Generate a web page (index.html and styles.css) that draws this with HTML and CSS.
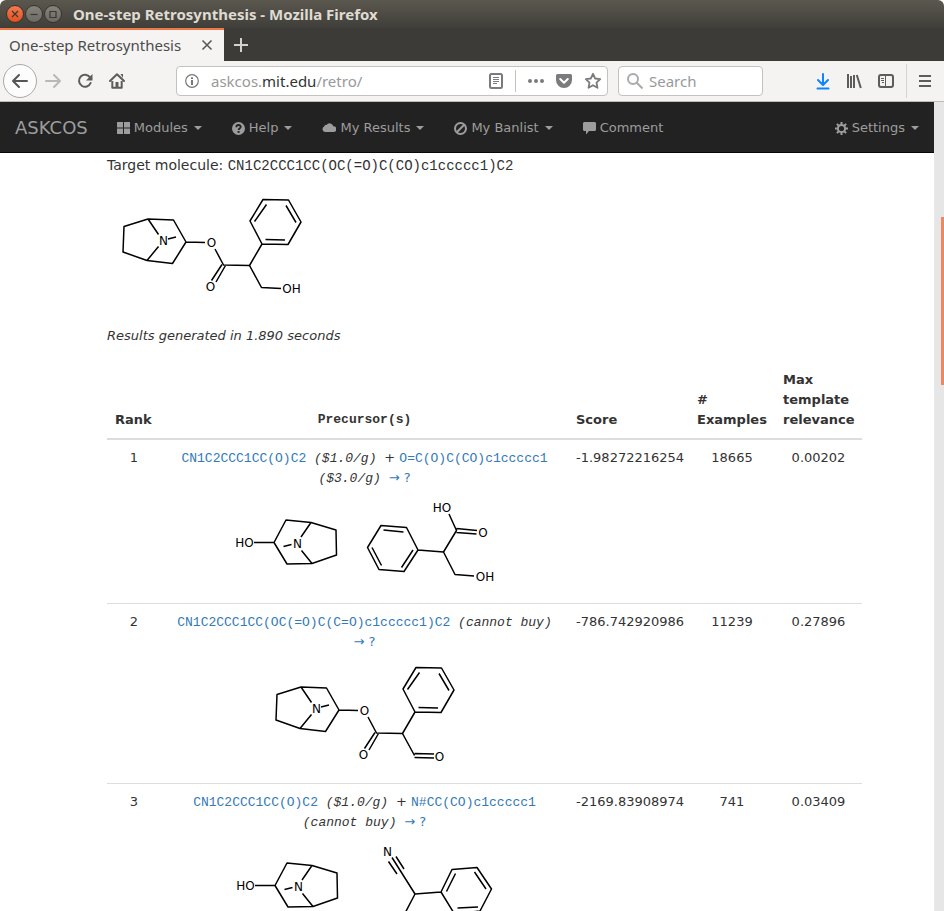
FILE: index.html
```html
<!DOCTYPE html>
<html lang="en">
<head>
<meta charset="utf-8">
<title>One-step Retrosynthesis</title>
<link rel="stylesheet" href="styles.css">
</head>
<body>
<header class="titlebar">
  <div class="window-buttons">
    <button class="win win-close" aria-label="Close window"><svg width="18" height="18" viewBox="0 0 18 18"><path d="M6 6l6 6m0-6l-6 6"/></svg></button>
    <button class="win" aria-label="Minimize"><svg width="18" height="18" viewBox="0 0 18 18"><path d="M5.500 9.500h7"/></svg></button>
    <button class="win" aria-label="Maximize"><svg width="18" height="18" viewBox="0 0 18 18"><path d="M6 6.500h6v6H6z"/></svg></button>
  </div>
  <span class="window-title">One-step Retrosynthesis - Mozilla Firefox</span>
</header>
<div class="tabs">
  <div class="tab"><span>One-step Retrosynthesis</span>
    <button class="plain" aria-label="Close tab"><svg width="12" height="12" viewBox="0 0 12 12" fill="none" stroke="#5a5957" stroke-width="1.6"><path d="M1.500 1.500l9 9m0-9l-9 9"/></svg></button>
  </div>
  <button class="plain new-tab" aria-label="New tab"><svg width="14" height="14" viewBox="0 0 14 14" fill="none" stroke="#d6d0ce" stroke-width="2"><path d="M7 0v14M0 7h14"/></svg></button>
</div>
<div class="toolbar">
  <button class="back" aria-label="Back"><svg width="18" height="16" viewBox="0 0 18 16" fill="none" stroke="#555" stroke-width="2" stroke-linecap="round" stroke-linejoin="round"><path d="M16 8H2M8 2L2 8l6 6"/></svg></button>
  <button class="plain tool" aria-label="Forward"><svg width="18" height="16" viewBox="0 0 18 16" fill="none" stroke="#b9b8b6" stroke-width="2" stroke-linecap="round" stroke-linejoin="round"><path d="M2 8h14M10 2l6 6-6 6"/></svg></button>
  <button class="plain tool" aria-label="Reload"><svg width="16" height="16" viewBox="0 0 16 16" fill="none" stroke="#5c5c5c" stroke-width="2"><path d="M13 4.400A6 6 0 1 0 13.600 10" stroke-linecap="round"/><path d="M15.500 1v6.500H9z" fill="#5c5c5c" stroke="none"/></svg></button>
  <button class="plain tool" aria-label="Home"><svg width="16" height="16" viewBox="0 0 16 16"><path d="M1 8l7-6.800L15 8" fill="none" stroke="#5c5c5c" stroke-width="2" stroke-linecap="round" stroke-linejoin="round"/><path d="M3.300 8v6.800h9.400V8" fill="none" stroke="#5c5c5c" stroke-width="2" stroke-linejoin="round"/><path d="M6.500 9h3v6h-3z" fill="#5c5c5c"/><path d="M11.500 1H14v4z" fill="#5c5c5c"/></svg></button>
  <div class="field url">
    <svg width="14" height="14" viewBox="0 0 14 14" fill="none" stroke="#777" stroke-width="1.2"><circle cx="7" cy="7" r="6.300"/><path d="M7 6v5M7 3.200v1.700" stroke-width="2"/></svg>
    <a class="address" href="#">askcos.<b>mit.edu</b>/retro/</a>
    <button class="plain" aria-label="Reader view"><svg width="14" height="16" viewBox="0 0 14 16" fill="none" stroke="#7b7b7b"><rect x="1" y="1" width="12" height="14" rx="1.500" stroke-width="2"/><path d="M4 4.500h6M4 6.500h6M4 8.500h6M4 10.500h4"/></svg></button>
    <span class="divider"></span>
    <button class="plain" aria-label="Page actions"><svg width="16" height="16" viewBox="0 0 16 16" fill="#7b7b7b"><circle cx="2" cy="8" r="2"/><circle cx="8" cy="8" r="2"/><circle cx="14" cy="8" r="2"/></svg></button>
    <button class="plain" aria-label="Save to Pocket"><svg width="16" height="16" viewBox="0 0 16 16"><path d="M1.500 1h13A1.500 1.500 0 0 1 16 2.500V7A8 8 0 0 1 0 7V2.500A1.500 1.500 0 0 1 1.500 1z" fill="#7b7b7b"/><path d="M4.200 6L8 9.700 11.800 6" fill="none" stroke="#fff" stroke-width="2" stroke-linecap="round" stroke-linejoin="round"/></svg></button>
    <button class="plain" aria-label="Bookmark"><svg width="18" height="18" viewBox="0 0 18 18" fill="none" stroke="#7b7b7b" stroke-width="1.800" stroke-linejoin="round"><path d="M9 1.800l2.200 4.700 5 .6-3.700 3.500 1 5.200L9 13.200l-4.500 2.600 1-5.200L1.800 7.100l5-.6z"/></svg></button>
  </div>
  <label class="field search"><svg width="16" height="16" viewBox="0 0 16 16" fill="none" stroke="#aaa" stroke-width="2"><circle cx="6" cy="6" r="5"/><path d="M9.700 9.700L15.500 15.500"/></svg><input type="text" aria-label="Search" placeholder="Search"></label>
  <div class="right-tools">
    <button class="plain" aria-label="Downloads"><svg width="14" height="17" viewBox="0 0 14 17" fill="none" stroke="#0a84ff" stroke-width="2" stroke-linecap="round" stroke-linejoin="round"><path d="M7 1v10.500M2 7l5 5 5-5M1.500 15.500h11"/></svg></button>
    <button class="plain" aria-label="Library"><svg width="16" height="16" viewBox="0 0 16 16" fill="none" stroke="#5c5c5c" stroke-width="2"><path d="M2 1v14M5 3v12M8 2v13M10.800 2l4 13"/></svg></button>
    <button class="plain" aria-label="Sidebars"><svg width="16" height="16" viewBox="0 0 16 16" fill="none" stroke="#5c5c5c"><rect x="1" y="2" width="14" height="12" rx="2" stroke-width="2"/><path d="M7.500 3v10M3 5.500h3M3 7.500h3M4 9.500h2"/></svg></button>
    <span class="divider tall"></span>
    <button class="plain" aria-label="Menu"><svg width="12" height="14" viewBox="0 0 12 14" stroke="#5c5c5c" stroke-width="2"><path d="M0 2h12M0 7h12M0 12h12"/></svg></button>
  </div>
</div>
<div class="viewport">
  <div class="page">
    <nav class="navbar">
      <a class="brand" href="#">ASKCOS</a>
      <a href="#"><svg width="13" height="13" viewBox="0 0 13 13"><path d="M0 0h6v5.500H0zM7 0h6v5.500H7zM0 6.500h6V12H0zM7 6.500h6V12H7z"/></svg>Modules<i class="caret"></i></a>
      <a href="#"><svg width="13" height="13" viewBox="0 0 13 13"><circle cx="6.500" cy="6.500" r="6.500"/><path d="M4.300 5.200C4.300 2.200 8.900 2.400 8.700 5 8.600 6.500 6.600 6.500 6.600 8" fill="none" stroke="#222" stroke-width="1.800"/><path d="M5.600 9h2v1.800h-2z" fill="#222"/></svg>Help<i class="caret"></i></a>
      <a href="#"><svg width="14" height="13" viewBox="0 0 14 13"><path d="M3 10A2.900 2.900 0 0 1 2.200 4.500 2 2 0 0 1 4.500 2.900 3.900 3.900 0 0 1 11.400 4.200a2.900 2.900 0 0 1 0 5.800z"/></svg>My Results<i class="caret"></i></a>
      <a href="#"><svg class="outline" width="13" height="13" viewBox="0 0 13 13"><circle cx="6.500" cy="6.500" r="5.500"/><path d="M2.800 10.200l7.400-7.400"/></svg>My Banlist<i class="caret"></i></a>
      <a href="#"><svg width="13" height="13" viewBox="0 0 13 13"><path d="M1 0h11l1 1v7l-1 1H6l-3 3.500V9H1L0 8V1z"/></svg>Comment</a>
      <a class="settings" href="#"><svg class="outline" width="13" height="13" viewBox="0 0 13 13"><circle cx="6.500" cy="6.500" r="3.600"/><path d="M6.500 0v2.500M6.500 10.500V13M0 6.500h2.500M10.500 6.500H13M1.900 1.900l1.800 1.800M9.300 9.300l1.800 1.800M11.100 1.900L9.300 3.700M3.700 9.300l-1.800 1.800"/></svg>Settings<i class="caret"></i></a>
    </nav>
    <main class="content">
      <p class="target">Target molecule: <code>CN1C2CCC1CC(OC(=O)C(CO)c1ccccc1)C2</code></p>
      <svg class="mol target-mol" width="204" height="130" viewBox="107 180 204 130">
        <g id="ester"><path d="M148 219L124 226.500 123 252 147 260.500 172.500 263.500 186 242 173.500 220zM148 219L158.500 234.500M147 260.500L158.500 246.500M168 239L176 237M186 242L205 242.500M215 249L223.500 265 249.500 265.500 262 244M222 264.500L211.500 280.500M225.500 265.500L216 282M262 244L250 221 263 199.500 288.500 200 301 222 288 244.500zM254.500 221.500L266.500 204.500M286 205.500L296 222.500M265.500 239.500L285 240"/>
        <text x="163.500" y="245">N</text><text x="211.500" y="247">O</text><text x="210.500" y="291">O</text></g>
        <path d="M249.500 265.500L261.500 287.500 281 288.500"/><text x="291.500" y="293">OH</text>
      </svg>
      <p class="timing">Results generated in 1.890 seconds</p>
      <table>
        <colgroup><col class="c-rank"><col><col class="c-score"><col class="c-ex"><col class="c-rel"></colgroup>
        <thead><tr><th>Rank</th><th class="precursor">Precursor(s)</th><th>Score</th><th># Examples</th><th>Max template relevance</th></tr></thead>
        <tbody>
          <tr><td>1</td><td><p><span class="smiles"><a href="#">CN1C2CCC1CC(O)C2</a> <em>($1.0/g)</em> </span>+ <span class="smiles"><a href="#">O=C(O)C(CO)c1ccccc1</a> <em>($3.0/g)</em> </span><a class="expand" href="#">→ ?</a></p>
            <svg class="mol" width="390" height="107" viewBox="170 488 390 107">
              <g id="tropine"><path d="M274 542.500L286 520 311 522.500 336 530 336.500 555 312 563.500 287 564zM311 522.500L301 537M301.500 550.500L312 563.500M283.500 546.500L291.500 544.500M254 542.500L274 542.500"/><text x="244.500" y="547">HO</text><text x="297.500" y="548">N</text></g>
              <path d="M418 550L406.500 527.500 381 525.500 367.500 547.500 379 569.500 404 571.500zM403.500 532L383.500 530M372 547.500L381.500 565.500M413 550L401.500 567.500M418 550L443.500 552 456.500 530.500 449 514M443.500 552L455 574.500 474 576M456.500 528.500L477 530.500M456.500 532.500L476.500 534"/><text x="442" y="512">HO</text><text x="483" y="537">O</text><text x="485" y="581">OH</text>
            </svg></td><td>-1.98272216254</td><td>18665</td><td>0.00202</td></tr>
          <tr><td>2</td><td><p><span class="smiles"><a href="#">CN1C2CCC1CC(OC(=O)C(C=O)c1ccccc1)C2</a> <em>(cannot buy)</em> </span><a class="expand" href="#">→ ?</a></p>
            <svg class="mol" width="390" height="123" viewBox="17 184 390 123"><use href="#ester"/><path d="M249.500 265.500L261.500 287.500M261.500 285.500L281 286M261.500 289.500L281 290"/><text x="286.500" y="293">O</text></svg></td><td>-786.742920986</td><td>11239</td><td>0.27896</td></tr>
          <tr><td>3</td><td><p><span class="smiles"><a href="#">CN1C2CCC1CC(O)C2</a> <em>($1.0/g)</em> </span>+ <span class="smiles"><a href="#">N#CC(CO)c1ccccc1</a> <em>(cannot buy)</em> </span><a class="expand" href="#">→ ?</a></p>
            <svg class="mol" width="390" height="120" viewBox="170 832 390 120"><use href="#tropine" x="1" y="343"/><path d="M392 857.500L415 894 441 892M441 892L452 869.500 477 867.500 491.500 889 480 911 454.500 914zM446.500 891.500L455.500 873.500M474.500 872L486 889M457.500 908L478 907M396 856.500L404 869M388.500 861.500L397 874M415 894L403 917"/><text x="387.500" y="856">N</text></svg></td><td>-2169.83908974</td><td>741</td><td>0.03409</td></tr>
        </tbody>
      </table>
    </main>
  </div>
  <div class="scrollbar"><div class="thumb"></div></div>
</div>
</body>
</html>
```
FILE: styles.css
```css
* { box-sizing: border-box; }
body { margin: 0; height: 100vh; display: flex; flex-direction: column; overflow: hidden; background: #fff; font: 13px/20px "DejaVu Sans", sans-serif; color: #333; }
button { font: inherit; padding: 0; }
a { color: #337ab7; text-decoration: none; }
svg { display: block; flex: none; }
p { margin: 0; }
.plain { border: 0; background: none; display: flex; align-items: center; justify-content: center; }

.titlebar { flex: none; height: 28px; display: flex; align-items: center; gap: 11px; padding: 0 6px; background: linear-gradient(#5a584e, #403e39); border-radius: 6px 6px 0 0; }
.window-buttons { display: flex; gap: 1px; }
.win { width: 18px; height: 18px; display: flex; align-items: center; justify-content: center; border: 1px solid #35342f; border-radius: 50%; background: linear-gradient(#85837a, #6c6a62); }
.win-close { background: linear-gradient(#f4794f, #e2521f); }
.win svg { fill: none; stroke: #3a3833; stroke-width: 1.2; }
.window-title { font: bold 15px/20px "Noto Sans", sans-serif; color: #dfdbd2; }

.tabs { flex: none; height: 33px; display: flex; background: #3c3b37; }
.tab { width: 224px; display: flex; align-items: center; justify-content: space-between; padding: 0 11px 2px 9px; background: #f5f4f2; border-top: 2px solid #f07746; font: 15px/20px "Noto Sans", sans-serif; color: #4c4c4c; }
.new-tab { width: 34px; }

.toolbar { flex: none; height: 41px; display: flex; align-items: center; padding: 0 13px 0 3px; background: #f4f3f1; border-bottom: 1px solid #bdbbb8; }
.back { width: 34px; height: 34px; display: flex; align-items: center; justify-content: center; border: 1px solid #aaa8a5; border-radius: 50%; background: #fcfcfc; }
.tool { width: 32px; }
.field { height: 30px; display: flex; align-items: center; background: #fff; border: 1px solid #c4c2bf; border-radius: 4px; font: 15px/20px "Noto Sans", sans-serif; }
.url { flex: 1; gap: 12px; margin-left: 43px; padding: 0 5px 0 8px; }
.address { flex: 1; color: #999; }
.address b { font-weight: normal; color: #333; }
.divider { width: 1px; height: 22px; background: #c4c2bf; }
.divider.tall { height: 34px; background: #d6d4d1; }
.search { width: 145px; margin-left: 10px; padding: 0 8px; gap: 6px; }
.search input { flex: 1; min-width: 0; border: 0; padding: 0; background: none; font: inherit; outline: 0; }
.search input::placeholder { color: #999; opacity: 1; }
.right-tools { display: flex; align-items: center; gap: 16px; margin-left: 53px; }
.right-tools .divider { margin: 0 -4px; }

.viewport { flex: 1; min-height: 0; display: flex; }
.page { flex: 1; min-width: 0; overflow: hidden; }
.scrollbar { width: 10px; background: #e6e6e6; padding: 115px 0 0 7px; }
.thumb { height: 168px; background: #f08763; }

.navbar { display: flex; align-items: center; height: 51px; padding: 2px 15px 0; background: #222; border-bottom: 1px solid #080808; }
.navbar a { display: flex; align-items: center; margin-right: 30px; color: #9d9d9d; }
.navbar svg { fill: #9d9d9d; margin-right: 4px; }
.navbar .outline { fill: none; stroke: #9d9d9d; stroke-width: 2; }
.navbar .brand { font-size: 18px; margin-right: 29px; }
.navbar .settings { margin: 0 0 0 auto; }
.caret { margin-left: 6px; border: 4px solid transparent; border-top-color: #9d9d9d; border-bottom: 0; }

.content { padding: 2px 72px 0 107px; }
.target { font-size: 14px; }
.target code { font: 14px/16px "Liberation Mono", monospace; }
.mol { fill: none; stroke: #000; stroke-width: 1.5; stroke-linejoin: round; overflow: hidden; }
.mol text { fill: #000; stroke: none; font: 12px "DejaVu Sans", sans-serif; text-anchor: middle; }
.target-mol { margin-top: 5px; }
.timing { margin: 16px 0; font-style: italic; }

table { width: 100%; table-layout: fixed; border-collapse: collapse; }
.c-rank { width: 54px; }
.c-score { width: 121px; }
.c-ex { width: 86px; }
.c-rel { width: 87px; }
th { padding: 8px; vertical-align: bottom; text-align: left; border-bottom: 2px solid #ddd; }
th.precursor { font-family: "Liberation Mono", monospace; text-align: center; }
td { padding: 8px; vertical-align: top; text-align: center; border-bottom: 1px solid #ddd; }
td .mol { margin: 0 auto; }
.smiles { font-family: "Liberation Mono", monospace; line-height: 16px; }
.expand { white-space: nowrap; }
```
